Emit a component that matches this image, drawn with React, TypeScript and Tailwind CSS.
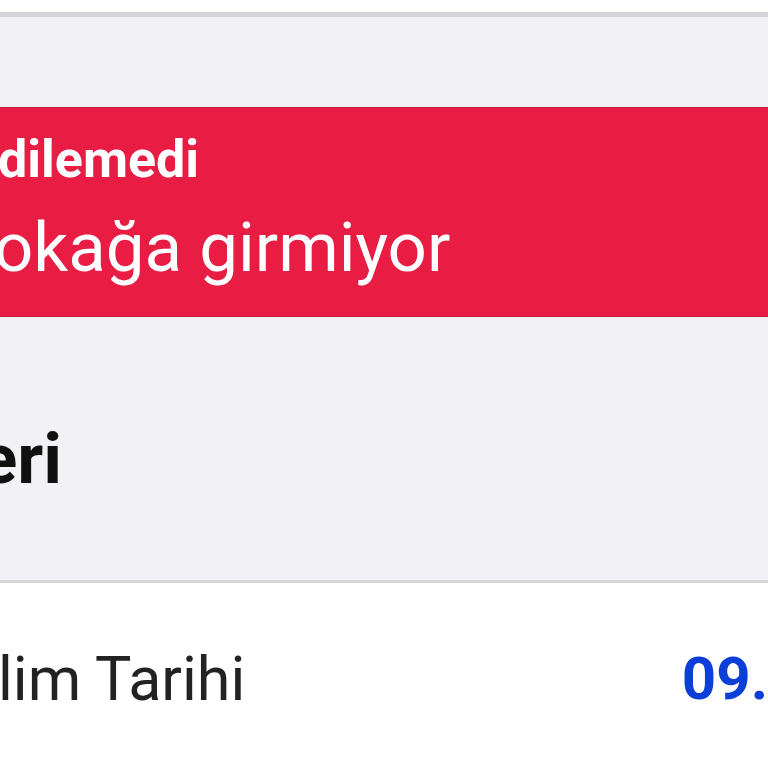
import React from "react";

const App = () => {
  return (
    <div className="flex h-[768px] w-[768px] flex-col overflow-hidden bg-white font-['Roboto',sans-serif]">
      <div className="h-[12px] shrink-0 bg-white" />
      <div className="h-[95px] shrink-0 border-t-[5px] border-[#d4d4d9] bg-[#f2f2f6]" />
      <div className="flex h-[210px] shrink-0 flex-col border-y border-[#c9173b] bg-[#e91c43] text-white">
        <p className="ml-[-2px] mt-[26px] whitespace-nowrap text-[52px] font-bold leading-none">
          dilemedi
        </p>
        <p className="ml-[-6px] mt-[27px] whitespace-nowrap text-[69px] leading-none">
          okağa girmiyor
        </p>
      </div>
      <div className="h-[263px] shrink-0 bg-[#f2f2f6]">
        <h2 className="ml-[-21px] mt-[106px] whitespace-nowrap text-[71px] font-bold leading-none text-[#111]">
          eri
        </h2>
      </div>
      <div className="flex flex-1 items-start border-t-[3px] border-[#d6d6d6] bg-white">
        <div className="mt-[66px] flex w-full items-start justify-between">
          <span className="ml-[-2px] whitespace-nowrap text-[61px] leading-none text-[#222]">
            lim Tarihi
          </span>
          <span className="mr-[-224px] whitespace-nowrap text-[60px] font-bold leading-none text-[#0b3fd8]">
            09.03.2023
          </span>
        </div>
      </div>
    </div>
  );
};

export default App;
